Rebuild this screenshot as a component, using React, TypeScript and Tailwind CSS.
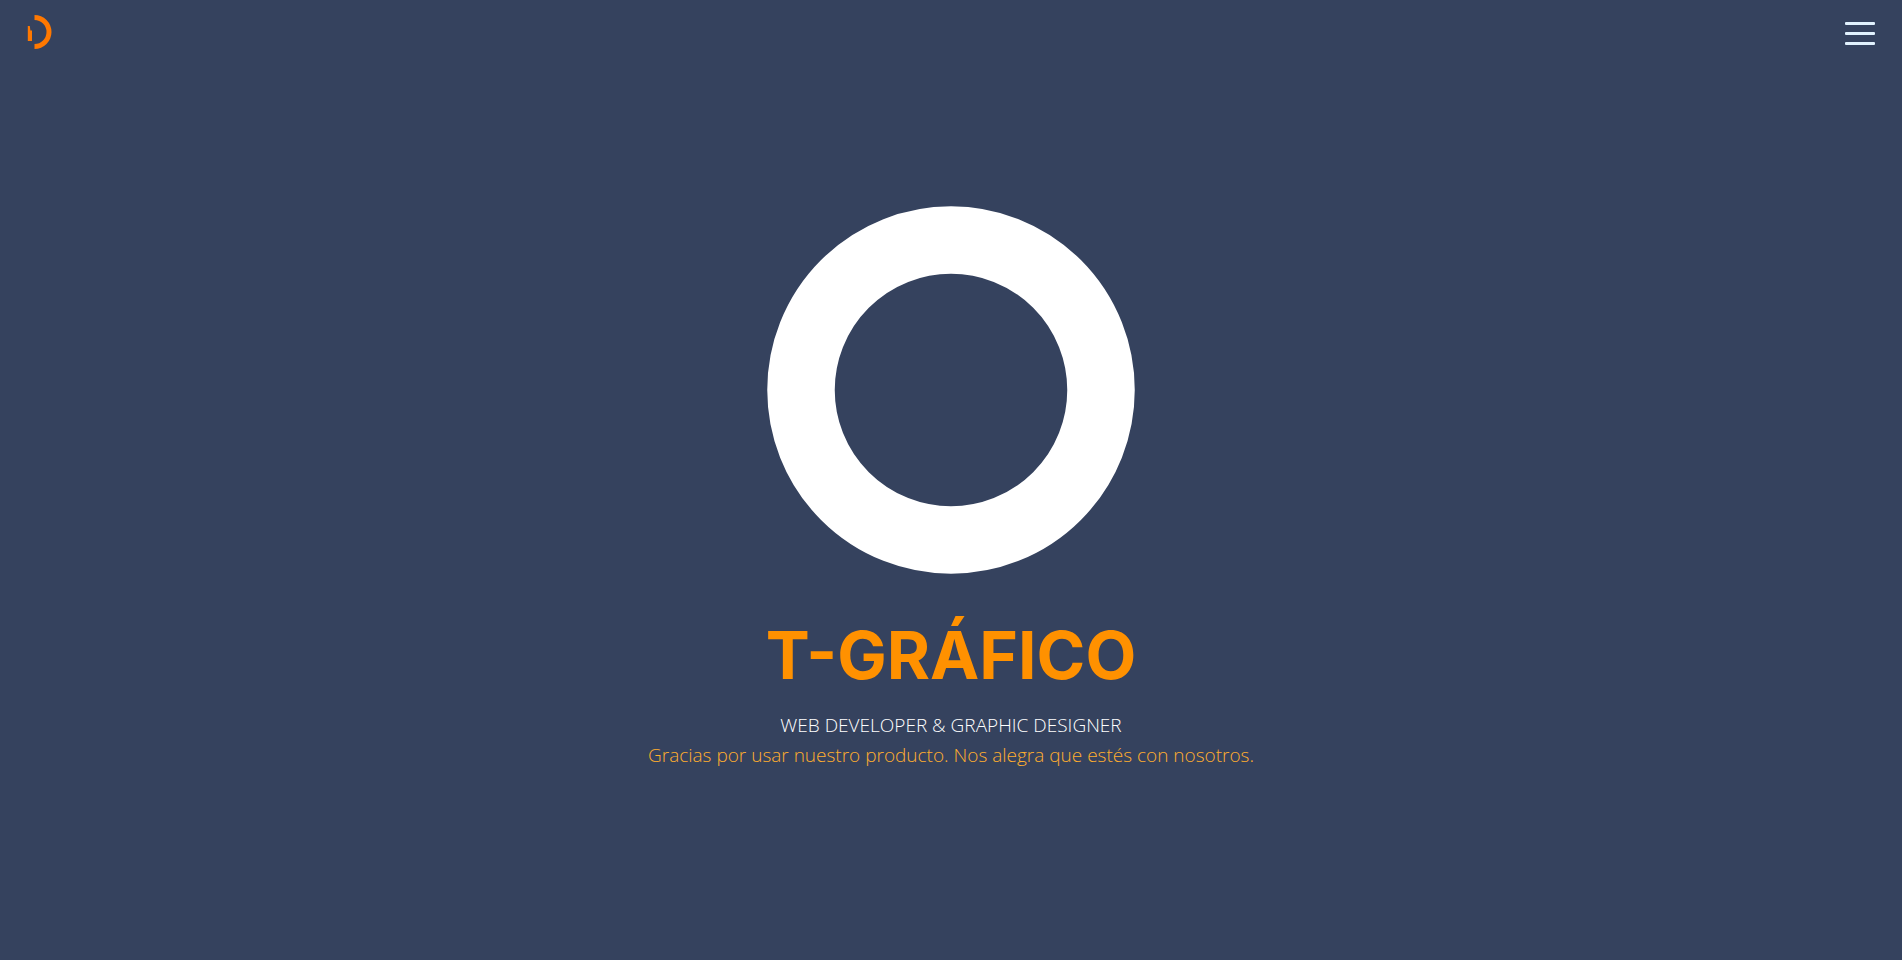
function Logo() {
  return (
    <svg width="25" height="34" viewBox="0 0 25 34" fill="#ff7800" aria-hidden="true">
      <path d="M7.500 0A17 17 0 0 1 7.500 34V29A12 12 0 0 0 7.500 5Z" />
      <path d="M.8 11H2.800L3.400 15.500H5V26H.8Z" />
    </svg>
  );
}

function MenuButton() {
  return (
    <button type="button" aria-label="Abrir menú" className="flex w-[30px] cursor-pointer flex-col gap-[7px] pt-[7px]">
      <span className="h-[3px] rounded-[1px] bg-[#e1f1fd]" />
      <span className="h-[3px] rounded-[1px] bg-[#e1f1fd]" />
      <span className="h-[3px] rounded-[1px] bg-[#e1f1fd]" />
    </button>
  );
}

export default function App() {
  return (
    <div className="flex min-h-screen flex-col bg-[#35425e] font-['Open_Sans',sans-serif]">
      <header className="flex items-start justify-between px-[27px] py-[15px]">
        <a href="#inicio" aria-label="Inicio">
          <Logo />
        </a>
        <MenuButton />
      </header>
      <main className="flex flex-1 flex-col items-center px-4 pt-[142px] text-center">
        <svg viewBox="0 0 368 368" className="w-full max-w-[368px]" aria-hidden="true">
          <circle cx="184" cy="184" r="150" fill="none" stroke="#fff" strokeWidth="67.500" />
        </svg>
        <h1 className="mt-10 font-['Inter',sans-serif] text-[66px] leading-[82px] font-bold text-[#ff9100]">
          T-GRÁFICO
        </h1>
        <p className="mt-[14px] text-[19px] leading-[30px] font-light text-white">
          WEB DEVELOPER &amp; GRAPHIC DESIGNER
        </p>
        <p className="text-[19px] leading-[30px] font-light text-[#ffae2e]">
          Gracias por usar nuestro producto. Nos alegra que estés con nosotros.
        </p>
      </main>
    </div>
  );
}
